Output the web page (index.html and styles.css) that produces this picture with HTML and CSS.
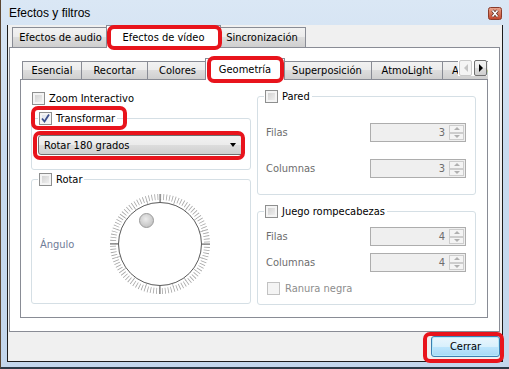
FILE: index.html
```html
<!DOCTYPE html>
<html lang="es">
<head>
    <meta charset="UTF-8">
    <title>Efectos y filtros</title>
    <link rel="stylesheet" href="styles.css">
</head>
<body>
<div class="window">
    <div class="titlebar">
        <span class="title">Efectos y filtros</span>
        <span class="close">
            <svg width="14" height="13" viewBox="0 0 14 13">
                <defs>
                    <linearGradient id="closeBg" x1="0" y1="0" x2="0" y2="1">
                        <stop offset="0" stop-color="#e9a690"/>
                        <stop offset="0.5" stop-color="#d6765b"/>
                        <stop offset="1" stop-color="#c2432a"/>
                    </linearGradient>
                </defs>
                <rect x="0.5" y="0.5" width="13" height="12" rx="2" fill="url(#closeBg)" stroke="#8a3b2a"/>
                <path d="M4.5 3.5L9.5 9.5M9.5 3.5L4.5 9.5" stroke="#5a2a20" stroke-width="3"/>
                <path d="M4.5 3.5L9.5 9.5M9.5 3.5L4.5 9.5" stroke="#fff" stroke-width="1.6"/>
            </svg>
        </span>
    </div>

    <div class="client">
        <div class="tabs outer-tabs">
            <div class="tab tab-audio">Efectos de audio</div>
            <div class="tab tab-video active">Efectos de vídeo</div>
            <div class="tab tab-sync">Sincronización</div>
        </div>

        <div class="pane outer-pane">
            <div class="tabs inner-tabs">
                <div class="tab tab-basic">Esencial</div>
                <div class="tab tab-crop">Recortar</div>
                <div class="tab tab-colors">Colores</div>
                <div class="tab tab-geometry active">Geometría</div>
                <div class="tab tab-overlay">Superposición</div>
                <div class="tab tab-atmo">AtmoLight</div>
                <div class="tab tab-advanced">Avanzado</div>
                <div class="scroller">
                    <span class="scroll-btn disabled"><i class="tri-left"></i></span>
                    <span class="scroll-btn"><i class="tri-right"></i></span>
                </div>
            </div>

            <div class="pane inner-pane">
                <div class="col">
                    <label class="check zoom-row"><span class="cb"></span>Zoom Interactivo</label>

                    <fieldset class="group transform">
                        <legend class="check"><span class="cb checked">
                            <svg width="11" height="11" viewBox="0 0 11 11"><path d="M2 5.5L4.5 8.5L9 1.5" fill="none" stroke="#3b4f8c" stroke-width="1.8"/></svg>
                        </span>Transformar</legend>
                        <div class="combo">Rotar 180 grados<span class="combo-arrow"></span></div>
                    </fieldset>

                    <fieldset class="group rotate">
                        <legend class="check"><span class="cb"></span>Rotar</legend>
                        <div class="angle-row">
                            <span class="angle-label">Ángulo</span>
                            <svg class="dial" width="104" height="104" viewBox="0 0 104 104">
                                <defs>
                                    <radialGradient id="knobBg" cx="0.45" cy="0.4" r="0.6">
                                        <stop offset="0" stop-color="#ececec"/>
                                        <stop offset="1" stop-color="#c2c2c2"/>
                                    </radialGradient>
                                </defs>
                                <circle cx="52" cy="52" r="47" fill="none" stroke="#a6a6a6" stroke-width="6" stroke-dasharray="0.8 2.1531"/>
                                <circle cx="52" cy="52" r="43.5" fill="none" stroke="#a6a6a6" stroke-width="3" stroke-dasharray="0.75 12.916"/>
                                <circle cx="52" cy="52" r="41.5" fill="#fff" stroke="#5a5a5a"/>
                                <path d="M52 2V10.5M52 93.5V102M2 52H10.5M93.5 52H102" stroke="#6a6a6a"/>
                                <circle cx="38.5" cy="28.5" r="7" fill="url(#knobBg)" stroke="#9c9c9c"/>
                            </svg>
                        </div>
                    </fieldset>
                </div>

                <div class="col">
                    <fieldset class="group wall">
                        <legend class="check"><span class="cb"></span>Pared</legend>
                        <div class="field-row">
                            <span class="field-label">Filas</span>
                            <span class="spin"><span class="spin-value">3</span><span class="spin-btns"><i class="up"></i><i class="down"></i></span></span>
                        </div>
                        <div class="field-row">
                            <span class="field-label">Columnas</span>
                            <span class="spin"><span class="spin-value">3</span><span class="spin-btns"><i class="up"></i><i class="down"></i></span></span>
                        </div>
                    </fieldset>

                    <fieldset class="group puzzle">
                        <legend class="check"><span class="cb"></span>Juego rompecabezas</legend>
                        <div class="field-row">
                            <span class="field-label">Filas</span>
                            <span class="spin"><span class="spin-value">4</span><span class="spin-btns"><i class="up"></i><i class="down"></i></span></span>
                        </div>
                        <div class="field-row">
                            <span class="field-label">Columnas</span>
                            <span class="spin"><span class="spin-value">4</span><span class="spin-btns"><i class="up"></i><i class="down"></i></span></span>
                        </div>
                        <label class="check disabled-check"><span class="cb"></span>Ranura negra</label>
                    </fieldset>
                </div>
            </div>
        </div>

        <div class="footer">
            <button class="btn">Cerrar</button>
        </div>
    </div>

    <!-- red marks drawn over the screenshot -->
    <div class="mark mark-video"></div>
    <div class="mark mark-geometry"></div>
    <div class="mark mark-transform"></div>
    <div class="mark mark-combo"></div>
    <div class="mark mark-close"></div>
</div>
</body>
</html>
```

FILE: styles.css
```css
* {
    box-sizing: border-box;
}

body {
    margin: 0;
    background-color: #cddef1;
    font-family: "DejaVu Sans Condensed", "DejaVu Sans", sans-serif;
    font-stretch: condensed;
    font-size: 11px;
    color: #000;
}

.window {
    position: relative;
    width: 509px;
    height: 369px;
    background: linear-gradient(#dae7f5, #c9dbef 40%, #c3d6ec);
    border-left: 1px solid #5b4633;
    border-bottom: 2px solid #2d3a48;
}

/* title bar */
.titlebar {
    height: 25px;
    display: flex;
    align-items: center;
    justify-content: space-between;
    padding: 1px 7px 0 8px;
}

.title {
    font-family: "Liberation Sans", Arial, sans-serif;
    font-size: 12px;
}

.close {
    display: flex;
}

/* client area */
.client {
    width: 496px;
    height: 337px;
    margin-left: 6px;
    background-color: #f0f0f0;
    border: 1px solid #1c1c1c;
    border-top: none;
    display: flex;
    flex-direction: column;
}

/* tabs */
.tabs {
    display: flex;
    align-items: flex-end;
    position: relative;
    z-index: 1;
}

.tab {
    display: flex;
    align-items: center;
    justify-content: center;
    flex: none;
    white-space: nowrap;
    border: 1px solid #898c95;
    border-bottom: none;
    margin-left: -1px;
    background: linear-gradient(#f2f2f2, #ebebeb 50%, #dddddd 50%, #cfcfcf);
}

.tab.active {
    position: relative;
    z-index: 2;
    background: #fff;
    margin: 0 -2px 0 -3px;
}

.outer-tabs {
    height: 23px;
    padding-left: 5px;
    margin-bottom: -1px;
}

.outer-tabs .tab {
    height: 20px;
    margin-bottom: 1px;
}

.outer-tabs .tab.active {
    height: 23px;
    margin-bottom: 0;
}

.tab-audio { width: 97px; }
.tab-video { width: 115px; }
.tab-sync { width: 88px; }

.inner-tabs {
    height: 22px;
    padding-left: 3px;
    margin-bottom: -1px;
    overflow: hidden;
}

.inner-tabs .tab {
    height: 18px;
    margin-bottom: 1px;
}

.inner-tabs .tab.active {
    height: 22px;
    margin-bottom: 0;
}

.tab-basic { width: 60px; }
.tab-crop { width: 67px; }
.tab-colors { width: 61px; }
.tab-geometry { width: 80px; }
.tab-overlay { width: 90px; }
.tab-atmo { width: 72px; }
.tab-advanced { width: 80px; justify-content: flex-start; padding-left: 9px; }

.scroller {
    position: absolute;
    right: 1px;
    top: 2px;
    display: flex;
    gap: 2px;
    padding-left: 1px;
    background: #fff;
}

.scroll-btn {
    width: 13px;
    height: 16px;
    border: 1px solid #707070;
    border-radius: 2px;
    background: linear-gradient(#f2f2f2, #ebebeb 50%, #dddddd 50%, #cfcfcf);
    display: flex;
    align-items: center;
    justify-content: center;
}

.scroll-btn.disabled {
    border-color: #c9c9c9;
    background: #f4f4f4;
}

.tri-left {
    border-right: 4px solid #c4c4c4;
    border-top: 4px solid transparent;
    border-bottom: 4px solid transparent;
}

.tri-right {
    border-left: 4px solid #000;
    border-top: 4px solid transparent;
    border-bottom: 4px solid transparent;
}

/* panes */
.pane {
    border: 1px solid #898c95;
    background-color: #fff;
}

.outer-pane {
    height: 285px;
    margin: 0 2px 0 1px;
    padding: 10px 11px 13px 10px;
}

.inner-pane {
    height: 239px;
    display: grid;
    grid-template-columns: 220px 219px;
    column-gap: 6px;
    align-items: start;
    padding: 10px 0 0 10px;
}

.col {
    display: flex;
    flex-direction: column;
}

/* checkboxes */
.check {
    display: flex;
    align-items: center;
    gap: 4px;
    line-height: 13px;
}

.cb {
    width: 13px;
    height: 13px;
    flex: none;
    border: 1px solid #8e8f8f;
    background: linear-gradient(135deg, #cbcbcb, #f6f6f6);
    box-shadow: inset 0 0 0 2px #f4f4f4;
    display: flex;
    align-items: center;
    justify-content: center;
}

.cb.checked {
    background: linear-gradient(135deg, #d9dee8, #fbfbfb);
}

.zoom-row {
    margin: 2px 0 0 1px;
}

.disabled-check {
    color: #8d8d8d;
    margin-left: 3px;
    gap: 5px;
}

.disabled-check .cb {
    border-color: #c2c2c2;
    background: #f4f4f4;
    box-shadow: none;
}

/* group boxes */
.group {
    margin: 0;
    min-width: 0;
    border: 1px solid #d5dfe5;
    border-radius: 3px;
    padding: 0 6px;
}

.group legend {
    padding: 0 2px 0 1px;
}

.transform {
    margin-top: 7px;
    padding-top: 10px;
    padding-bottom: 14px;
}

.combo {
    height: 20px;
    display: flex;
    align-items: center;
    justify-content: space-between;
    padding: 0 7px 0 5px;
    border: 1px solid #707070;
    border-radius: 3px;
    background: linear-gradient(#f2f2f2, #ebebeb 50%, #dddddd 50%, #cfcfcf);
}

.combo-arrow {
    border-top: 4px solid #000;
    border-left: 3.5px solid transparent;
    border-right: 3.5px solid transparent;
}

.rotate {
    margin-top: 3px;
    padding-top: 6px;
    padding-bottom: 7px;
}

.angle-row {
    display: grid;
    grid-template-columns: 70px 104px;
    align-items: center;
}

.angle-label {
    padding-left: 2px;
    color: #6f7c98;
}

.dial {
    display: block;
}

.wall {
    padding-top: 20px;
    padding-bottom: 16px;
    display: flex;
    flex-direction: column;
    gap: 17px;
}

.puzzle {
    margin-top: 10px;
    padding-top: 9px;
    padding-bottom: 9px;
    display: flex;
    flex-direction: column;
    gap: 7px;
}

.puzzle .disabled-check {
    margin-top: 3px;
}

.field-row {
    display: flex;
    align-items: center;
    justify-content: space-between;
    padding: 0 3px 0 2px;
}

.field-label {
    color: #6d6d6d;
}

.spin {
    width: 96px;
    height: 19px;
    display: flex;
    align-items: center;
    justify-content: flex-end;
    border: 1px solid #adadad;
    background-color: #efefef;
    padding: 1px;
}

.spin-value {
    color: #6d6d6d;
    padding-right: 4px;
}

.spin-btns {
    width: 15px;
    height: 100%;
    display: flex;
    flex-direction: column;
}

.spin-btns i {
    flex: 1;
    border: 1px solid #cdcdcd;
    background-color: #f4f4f4;
    display: flex;
    align-items: center;
    justify-content: center;
}

.spin-btns i::after {
    content: "";
    border-left: 3px solid transparent;
    border-right: 3px solid transparent;
}

.spin-btns .up::after {
    border-bottom: 3px solid #b0b0b0;
}

.spin-btns .down::after {
    border-top: 3px solid #b0b0b0;
}

/* footer */
.footer {
    display: flex;
    justify-content: flex-end;
    padding: 4px 2px 0 0;
}

.btn {
    width: 69px;
    height: 21px;
    font: inherit;
    border: 1px solid #3c7fb1;
    border-radius: 3px;
    background: linear-gradient(#eaf6fd, #d9f0fc 50%, #bee6fd 50%, #a7d9f5);
    box-shadow: inset 0 0 0 1px #b6eafb;
    color: #000;
}

/* annotations */
.mark {
    position: absolute;
    border: 4px solid #e8141c;
    border-radius: 7px;
    z-index: 5;
}

.mark-video {
    left: 106px;
    top: 25px;
    width: 115px;
    height: 25px;
}

.mark-geometry {
    left: 206px;
    top: 56px;
    width: 77px;
    height: 27px;
}

.mark-transform {
    left: 30px;
    top: 106px;
    width: 96px;
    height: 24px;
}

.mark-combo {
    left: 32px;
    top: 131px;
    width: 212px;
    height: 29px;
}

.mark-close {
    left: 422px;
    top: 332px;
    width: 81px;
    height: 31px;
}
```
